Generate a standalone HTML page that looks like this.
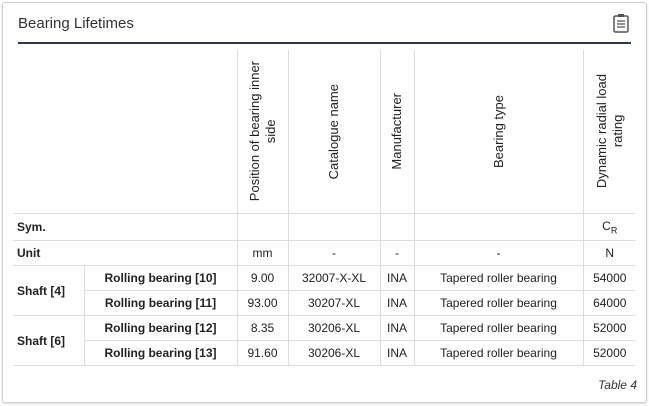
<!DOCTYPE html>
<html><head><style>
body{margin:0;width:649px;height:406px;background:#fff;font-family:"Liberation Sans",sans-serif;overflow:hidden}
.card{position:absolute;left:2px;top:2px;width:643px;height:399px;border:1px solid #cfcfcf;border-radius:3px;box-shadow:0 1px 2px rgba(0,0,0,.15)}
.title{position:absolute;left:18px;top:15px;font-size:15px;color:#333}
.rule{position:absolute;left:18px;top:42px;width:613px;height:2px;background:#2f3b4a}
table{position:absolute;left:13px;top:50px;border-collapse:collapse;font-size:12px;color:#222;table-layout:fixed}
td{border:1px solid #ddd;padding:0;text-align:center;height:24px;white-space:nowrap}
tr.h td{height:163px;border-top:none}
tr td:first-child{border-left:none}
tr td:last-child{border-right:none}
.v{display:flex;align-items:center;justify-content:center;height:163px}
.v span{writing-mode:vertical-rl;transform:rotate(180deg);text-align:center;line-height:16px;font-size:13px}
.l{text-align:left;padding-left:4px;font-weight:bold}
.b{font-weight:bold}
.cap{position:absolute;right:12px;top:378px;font-style:italic;font-size:12px;color:#333}
</style></head><body>
<div class="card"></div>
<div class="title">Bearing Lifetimes</div>
<svg style="position:absolute;left:612px;top:13px" width="18" height="20" viewBox="0 0 18 20"><rect x="2" y="3" width="14" height="16" rx="1.5" fill="none" stroke="#555" stroke-width="1.5"/><rect x="6" y="1" width="6" height="3" fill="#555"/><path d="M5 8h8M5 11h8M5 14h8" stroke="#555" stroke-width="1.2"/></svg>
<div class="rule"></div>
<table>
<colgroup><col style="width:71px"><col style="width:153px"><col style="width:51px"><col style="width:92px"><col style="width:34px"><col style="width:169px"><col style="width:53px"></colgroup>
<tr class="h"><td colspan="2" style="border-right:1px solid #ddd"></td>
<td><div class="v"><span>Position of bearing inner<br>side</span></div></td>
<td><div class="v"><span>Catalogue name</span></div></td>
<td><div class="v"><span>Manufacturer</span></div></td>
<td><div class="v"><span>Bearing type</span></div></td>
<td><div class="v"><span>Dynamic radial load<br>rating</span></div></td></tr>
<tr><td colspan="2" class="l" style="height:26px">Sym.</td><td></td><td></td><td></td><td></td><td>C<sub style="font-size:9px">R</sub></td></tr>
<tr><td colspan="2" class="l">Unit</td><td>mm</td><td>-</td><td>-</td><td>-</td><td>N</td></tr>
<tr><td rowspan="2" class="l">Shaft [4]</td><td class="b">Rolling bearing [10]</td><td>9.00</td><td>32007-X-XL</td><td>INA</td><td>Tapered roller bearing</td><td>54000</td></tr>
<tr><td class="b">Rolling bearing [11]</td><td>93.00</td><td>30207-XL</td><td>INA</td><td>Tapered roller bearing</td><td>64000</td></tr>
<tr><td rowspan="2" class="l">Shaft [6]</td><td class="b">Rolling bearing [12]</td><td>8.35</td><td>30206-XL</td><td>INA</td><td>Tapered roller bearing</td><td>52000</td></tr>
<tr><td class="b">Rolling bearing [13]</td><td>91.60</td><td>30206-XL</td><td>INA</td><td>Tapered roller bearing</td><td>52000</td></tr>
</table>
<div class="cap">Table 4</div>
</body></html>
